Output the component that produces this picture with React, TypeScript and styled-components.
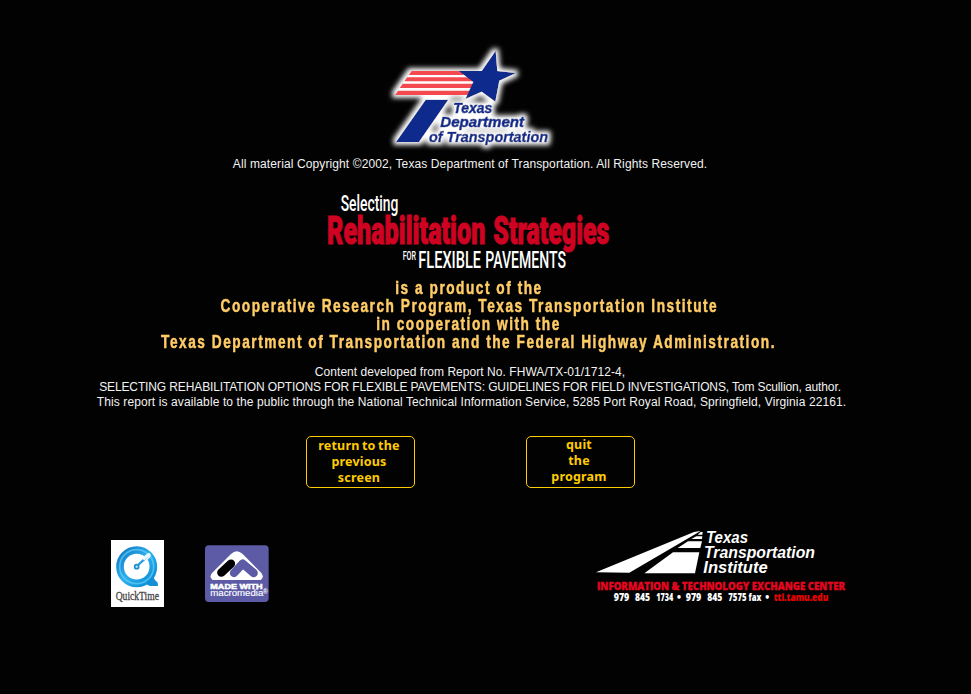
import React from "react";
import styled, { createGlobalStyle } from "styled-components";

const GlobalStyle = createGlobalStyle`
  * { box-sizing: border-box; }
  html, body { margin: 0; background: #020202; }
`;

const Screen = styled.main`
  width: 940px;
  height: 694px;
  padding-top: 40px;
  display: flex;
  flex-direction: column;
  align-items: center;
  color: #f2f2f2;
  font-family: "Liberation Sans", Arial, sans-serif;
`;

const Art = styled.svg<{ $font?: string }>`
  display: block;
  flex: none;
  overflow: visible;
  font-family: ${(p) => p.$font ?? '"Liberation Sans", Arial, sans-serif'};
`;

const SmallLine = styled.p<{ $tracking: number; $indent?: number }>`
  margin: 0 0 0 ${(p) => p.$indent ?? 0}px;
  font-size: 12px;
  line-height: 15px;
  white-space: nowrap;
  letter-spacing: ${(p) => p.$tracking}px;
`;

const Copyright = styled.div`
  margin: 2px 0 13px;
`;

const Title = styled.h1`
  margin: 0 6px 0 0;
`;

const Credits = styled.section`
  margin-top: 4px;
  display: flex;
  flex-direction: column;
  align-items: center;
`;

const CreditLine = styled.p`
  margin: 0 0 0 -2px;
  color: #ffcc66;
  font-size: 18px;
  font-weight: 700;
  line-height: 18px;
  white-space: nowrap;
  letter-spacing: 2px;
  -webkit-text-stroke: 0.5px #ffcc66;
  transform: scaleX(0.76);
`;

const Report = styled.section`
  margin-top: 14px;
  display: flex;
  flex-direction: column;
  align-items: center;
`;

const Actions = styled.nav`
  margin: 26px 0 0 1px;
  display: flex;
  gap: 111px;
`;

const ActionButton = styled.button<{ $lift?: boolean }>`
  width: 109px;
  height: 52px;
  padding: ${(p) => (p.$lift ? "0 3px 2px 0" : "0 3px 0 0")};
  background: transparent;
  border: 1px solid #ffcc00;
  border-radius: 5px;
  color: #ffcc00;
  font: 700 12.5px/16px "Noto Sans", sans-serif;
  letter-spacing: 0.2px;
  word-spacing: -1px;
  white-space: pre-line;
`;

const Footer = styled.footer`
  align-self: stretch;
  margin-top: 32px;
  padding-left: 100px;
  display: flex;
`;

const Badges = styled.div`
  margin-top: 10px;
  display: flex;
`;

const Contact = styled.div`
  margin-left: 305px;
  height: 90px;
`;

const TxDotLogo = () => (
  <Art width="180" height="115" viewBox="0 0 540 345">
    <defs>
      <filter id="halo" x="-10%" y="-12%" width="120%" height="125%">
        <feMorphology in="SourceAlpha" operator="dilate" radius="8" result="fat" />
        <feGaussianBlur in="fat" stdDeviation="8" result="soft" />
        <feFlood floodColor="#fff" />
        <feComposite in2="soft" operator="in" result="glow" />
        <feMerge>
          <feMergeNode in="glow" />
          <feMergeNode in="SourceGraphic" />
        </feMerge>
      </filter>
    </defs>
    <g filter="url(#halo)">
      <path d="M95 93H250L282 125L262 165H45Z" fill="#fff" />
      <path d="M95 93H250V105H86ZM81 112H265L278 124H73ZM68 131H280L274 144H59ZM54 152H270L262 165H45Z" fill="#f44a50" />
      <path d="M347 32L352 93L408 99L358 122L346 185L305 155L256 177L280 126L237 93L305 93Z" fill="#082c8c" />
      <path d="M137 179H205L117 306H48Z" fill="#082c8c" />
      <g fontWeight="700" fontStyle="italic" fontSize="43">
        <g fill="#fff" stroke="#fff" strokeWidth="9" strokeLinejoin="round" aria-hidden="true">
          <path d="M224 190H337L333 232H432L428 262H190L196 232H218Z" opacity="0.35" stroke="none" />
        </g>
        <g fill="#082c8c" stroke="#082c8c" strokeWidth="1.8">
          <text x="220" y="220" textLength="117" lengthAdjust="spacingAndGlyphs">Texas</text>
          <text x="181" y="260" textLength="251" lengthAdjust="spacingAndGlyphs">Department</text>
          <text x="147" y="306" textLength="357" lengthAdjust="spacingAndGlyphs">of Transportation</text>
        </g>
      </g>
    </g>
  </Art>
);

const TitleLogo = () => (
  <Art width="305" height="90" viewBox="0 0 915 270" $font='Roboto, "Liberation Sans", sans-serif'>
    <g fill="#fff" fontWeight="500">
      <text x="77" y="77" fontSize="64" textLength="173" lengthAdjust="spacingAndGlyphs">Selecting</text>
      <text x="263" y="224" fontSize="38" textLength="40" lengthAdjust="spacingAndGlyphs">FOR</text>
      <text x="310" y="250" fontSize="71" textLength="188" lengthAdjust="spacingAndGlyphs">FLEXIBLE</text>
      <text x="511" y="250" fontSize="71" textLength="242" lengthAdjust="spacingAndGlyphs">PAVEMENTS</text>
    </g>
    <g fill="#d00222" stroke="#d00222" strokeWidth="3" fontWeight="900" fontSize="114">
      <text x="36" y="176" textLength="475" lengthAdjust="spacingAndGlyphs">Rehabilitation</text>
      <text x="535" y="176" textLength="348" lengthAdjust="spacingAndGlyphs">Strategies</text>
    </g>
  </Art>
);

const QuickTimeBadge = () => (
  <Art width="75" height="85" viewBox="0 0 225 255" $font='"Liberation Serif", serif'>
    <defs>
      <linearGradient id="aqua" x1="0" y1="0" x2="1" y2="1">
        <stop offset="0" stopColor="#1279c4" />
        <stop offset="0.5" stopColor="#2cb0ee" />
        <stop offset="1" stopColor="#0a8ad2" />
      </linearGradient>
    </defs>
    <path d="M33 30H192V231H33Z" fill="#fff" />
    <path d="M125 150L158 126Q160 150 172 156Q174 162 174 168H151Q138 165 125 150Z" fill="#168ed5" />
    <circle cx="110" cy="110" r="50" fill="none" stroke="url(#aqua)" strokeWidth="23" />
    <circle cx="110" cy="110" r="51" fill="none" stroke="#69d3fb" strokeWidth="5" opacity="0.65" />
    <path d="M111 108L145 77" stroke="#fff" strokeWidth="14" strokeLinecap="round" />
    <path d="M111 108L145 77" stroke="#269ce0" strokeWidth="7" strokeLinecap="round" />
    <path d="M133 86L147 74" stroke="#e8f8ff" strokeWidth="9" strokeLinecap="round" />
    <circle cx="110" cy="110" r="6" fill="#bdeaff" stroke="#1b8bd0" strokeWidth="5" />
    <text x="47" y="210" fontSize="36" fill="#444" stroke="#444" strokeWidth="0.8" textLength="130" lengthAdjust="spacingAndGlyphs">QuickTime</text>
  </Art>
);

const MacromediaBadge = () => (
  <Art width="105" height="85" viewBox="225 0 315 255">
    <rect x="315" y="46" width="191" height="170" rx="12" fill="#5d5ba6" />
    <path d="M393 72Q410 55 428 72L484 129Q494 142 482 150H338Q326 142 336 129Z" fill="#fff" />
    <path d="M364 128L393 101" stroke="#000" strokeWidth="25" strokeLinecap="round" />
    <path d="M402 129L428 101L461 129" fill="none" stroke="#5d5ba6" strokeWidth="25" strokeLinecap="round" strokeLinejoin="round" />
    <g fill="#fff">
      <text x="331" y="177" fontSize="22" fontWeight="700" stroke="#fff" strokeWidth="1.5" textLength="157" lengthAdjust="spacingAndGlyphs">MADE WITH</text>
      <text x="331" y="198" fontSize="27" stroke="#fff" strokeWidth="0.4" textLength="159" lengthAdjust="spacingAndGlyphs">macromedia</text>
      <text x="488" y="191" fontSize="21" fontWeight="700">®</text>
    </g>
  </Art>
);

const InstituteLogo = () => (
  <Art width="270" height="90" viewBox="0 0 810 270">
    <g fill="#fff">
      <path d="M33 157L327 36L347 33L133 158ZM178 160L264 97H343L330 160ZM278 84L309 64H351L346 84ZM319 57L334 49H352L351 57ZM338 44L347 36H353L352 44Z" />
      <g fontWeight="700" fontStyle="italic" fontSize="49">
        <text x="363" y="70" textLength="126" lengthAdjust="spacingAndGlyphs">Texas</text>
        <text x="357" y="115" textLength="333" lengthAdjust="spacingAndGlyphs">Transportation</text>
        <text x="355" y="158" textLength="193" lengthAdjust="spacingAndGlyphs">Institute</text>
      </g>
    </g>
    <g fontFamily="'Open Sans', sans-serif" fontWeight="800">
      <text x="36" y="209" fontSize="33" fill="#e60620" stroke="#e60620" strokeWidth="1" textLength="744" lengthAdjust="spacingAndGlyphs">INFORMATION &amp; TECHNOLOGY EXCHANGE CENTER</text>
      <g fontSize="30" fill="#fff">
        <text x="86" y="243" textLength="47" lengthAdjust="spacingAndGlyphs">979</text>
        <text x="150" y="243" textLength="45" lengthAdjust="spacingAndGlyphs">845</text>
        <text x="214" y="243" textLength="51" lengthAdjust="spacingAndGlyphs">1734</text>
        <text x="276" y="243">•</text>
        <text x="302" y="243" textLength="47" lengthAdjust="spacingAndGlyphs">979</text>
        <text x="367" y="243" textLength="45" lengthAdjust="spacingAndGlyphs">845</text>
        <text x="430" y="243" textLength="99" lengthAdjust="spacingAndGlyphs">7575 fax</text>
        <text x="541" y="243">•</text>
        <text x="566" y="243" fill="#f00000" textLength="164" lengthAdjust="spacingAndGlyphs">tti.tamu.edu</text>
      </g>
    </g>
  </Art>
);

export default function App() {
  return (
    <>
      <GlobalStyle />
      <Screen>
        <TxDotLogo />
        <Copyright>
          <SmallLine $tracking={0.11}>
            All material Copyright ©2002, Texas Department of Transportation. All Rights Reserved.
          </SmallLine>
        </Copyright>
        <Title>
          <TitleLogo />
        </Title>
        <Credits>
          <CreditLine>is a product of the</CreditLine>
          <CreditLine>Cooperative Research Program, Texas Transportation Institute</CreditLine>
          <CreditLine>in cooperation with the</CreditLine>
          <CreditLine>
            Texas Department of Transportation and the Federal Highway Administration.
          </CreditLine>
        </Credits>
        <Report>
          <SmallLine $tracking={0.05}>Content developed from Report No. FHWA/TX-01/1712-4,</SmallLine>
          <SmallLine $tracking={-0.12}>
            SELECTING REHABILITATION OPTIONS FOR FLEXIBLE PAVEMENTS: GUIDELINES FOR FIELD INVESTIGATIONS, Tom Scullion, author.
          </SmallLine>
          <SmallLine $tracking={0.11} $indent={3}>
            This report is available to the public through the National Technical Information Service, 5285 Port Royal Road, Springfield, Virginia 22161.
          </SmallLine>
        </Report>
        <Actions>
          <ActionButton>{"return to the\nprevious\nscreen"}</ActionButton>
          <ActionButton $lift>{"quit\nthe\nprogram"}</ActionButton>
        </Actions>
        <Footer>
          <Badges>
            <QuickTimeBadge />
            <MacromediaBadge />
          </Badges>
          <Contact>
            <InstituteLogo />
          </Contact>
        </Footer>
      </Screen>
    </>
  );
}
